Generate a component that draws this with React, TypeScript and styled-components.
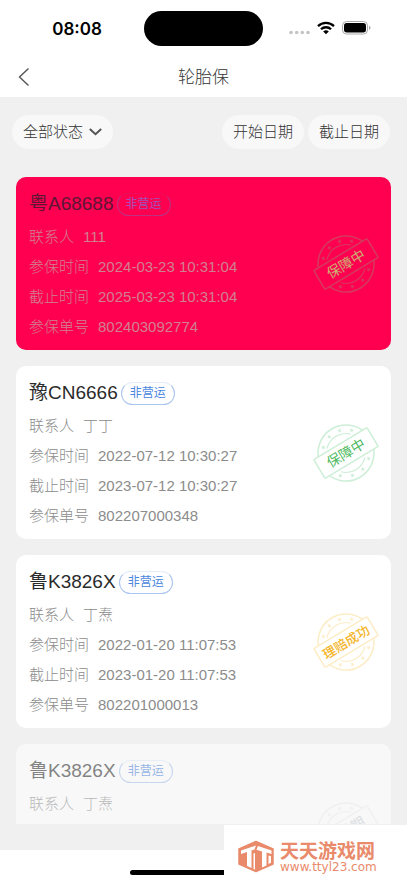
import React from 'react';
import styled, { createGlobalStyle } from 'styled-components';

const GlobalStyle = createGlobalStyle`
  * { box-sizing: border-box; }
  body {
    margin: 0;
    background: #fff;
    font-family: "Liberation Sans", "Noto Sans CJK SC", sans-serif;
  }
  button { font-family: inherit; border: 0; padding: 0; cursor: pointer; }
`;

const Screen = styled.div`
  height: 100vh;
  display: flex;
  flex-direction: column;
  overflow: hidden;
`;

const StatusBar = styled.div`
  display: grid;
  grid-template-columns: 1fr 119px 1fr;
  align-items: center;
  height: 57px;
  flex: none;
`;

const Clock = styled.time`
  justify-self: center;
  padding-left: 10px;
  font: 600 17px/24px Inter, sans-serif;
  color: #000;
`;

const Island = styled.div`
  height: 35px;
  border-radius: 18px;
  background: #000;
`;

const StatusIcons = styled.div`
  display: flex;
  justify-content: center;
  align-items: center;
  gap: 7px;
  padding: 0 10px 2px 0;
`;

const NavBar = styled.header`
  display: grid;
  grid-template-columns: 48px 1fr 48px;
  align-items: center;
  height: 40px;
  flex: none;
`;

const BackButton = styled.button`
  display: flex;
  align-items: center;
  justify-content: center;
  height: 40px;
  background: none;
`;

const Title = styled.h1`
  margin: 0;
  padding-top: 2px;
  text-align: center;
  font-size: 17px;
  line-height: 24px;
  font-weight: 300;
  color: #333;
`;

const Main = styled.main`
  flex: 1;
  min-height: 0;
  display: flex;
  flex-direction: column;
  background: #f0f0f0;
  padding: 18px 16px 26px;
`;

const Filters = styled.div`
  display: flex;
  gap: 4px;
  margin: 0 1px 28px -4px;
  flex: none;
`;

const Pill = styled.button<{ $lead?: boolean }>`
  display: flex;
  align-items: center;
  gap: 6px;
  height: 34px;
  padding: 0 11px;
  margin-right: ${(p) => (p.$lead ? 'auto' : '0')};
  border-radius: 17px;
  background: #f8f8f8;
  font-size: 15px;
  line-height: 32px;
  font-weight: 300;
  color: #333;
  white-space: nowrap;
`;

const List = styled.div`
  flex: 1;
  min-height: 0;
  overflow: hidden;
  display: flex;
  flex-direction: column;
  gap: 16px;
`;

const Card = styled.article<{ $active?: boolean; $faded?: boolean }>`
  display: flex;
  align-items: center;
  justify-content: space-between;
  flex: none;
  min-height: 173px;
  padding: 9px 12px 8px 13px;
  border-radius: 10px;
  background: ${(p) => (p.$active ? '#ff0050' : '#fff')};
  opacity: ${(p) => (p.$faded ? 0.55 : 1)};
  color: ${(p) => (p.$active ? '#d0808f' : '#8c8c8c')};
`;

const Info = styled.div`
  align-self: flex-start;
`;

const Heading = styled.div`
  display: flex;
  align-items: center;
  gap: 3px;
  height: 36px;
`;

const Plate = styled.h2<{ $active?: boolean }>`
  margin: 0;
  font-size: 19px;
  line-height: 28px;
  font-weight: 400;
  color: ${(p) => (p.$active ? '#601535' : '#2b2b2b')};
`;

const Tag = styled.span<{ $active?: boolean }>`
  height: 23px;
  padding: 0 8px;
  border: 1px solid ${(p) => (p.$active ? '#c03080' : '#a9c4ee')};
  border-top-color: ${(p) => (p.$active ? '#f00a58' : '#e3ecfa')};
  border-radius: 12px;
  font-size: 12px;
  line-height: 21px;
  color: ${(p) => (p.$active ? '#a052b8' : '#4a86dd')};
`;

const Details = styled.dl`
  margin: 0;
`;

const Row = styled.div`
  display: flex;
  gap: 9px;
  font-size: 15px;
  line-height: 30px;
  font-weight: 300;
`;

const Label = styled.dt`
  margin: 0;
`;

const Value = styled.dd`
  margin: 0;
`;

const Watermark = styled.a`
  position: fixed;
  right: 0;
  bottom: 0;
  display: flex;
  align-items: center;
  gap: 5px;
  width: 183px;
  height: 58px;
  padding: 5px 0 0 13px;
  background: #fff;
  color: #e98a6b;
  text-decoration: none;
`;

const Brand = styled.span`
  display: flex;
  flex-direction: column;
`;

const BrandName = styled.strong`
  font: 700 19px/20px "Noto Sans CJK SC", sans-serif;
`;

const BrandUrl = styled.span`
  font: 400 12px/14px "DejaVu Sans", sans-serif;
`;

const HomeArea = styled.footer`
  flex: none;
  display: flex;
  justify-content: center;
  align-items: flex-end;
  height: 33px;
  padding-bottom: 8px;
  background: #fff;
`;

const HomeBar = styled.div`
  width: 36%;
  height: 5px;
  border-radius: 3px;
  background: #000;
`;

type StampProps = { text: string; line: string; ink: string; fill: string };

const Stamp = ({ text, line, ink, fill }: StampProps) => (
  <svg width="66" height="66" viewBox="-33 -33 66 66" role="img" aria-label={text}>
    <g transform="rotate(-31)" fill="none" stroke={line}>
      <circle r="28" strokeWidth="1.5" />
      <path d="M-14-13.5A19.5 19.5 0 0 1 14-13.5M-14 13.5A19.5 19.5 0 0 0 14 13.5" strokeWidth="1.2" />
      {[-45, -15, 15, 45, 135, 165, 195, 225].map((a) => (
        <path
          key={a}
          transform={`rotate(${a}) translate(0 -23.5)`}
          d="M0-2.2 .7-.7 2.2-.6 1 .5 1.4 2.2 0 1.2-1.4 2.2-1 .5-2.2-.6-.7-.7Z"
          fill={line}
          stroke="none"
        />
      ))}
      <rect x="-31" y="-11" width="62" height="22" rx="1" fill={fill} strokeWidth="1.5" />
      <text
        y="5"
        textAnchor="middle"
        fontSize={text.length > 3 ? 13 : 14}
        fontWeight={text.length > 3 ? 500 : 400}
        fontFamily="Noto Sans CJK SC, sans-serif"
        fill={ink}
        stroke="none"
      >
        {text}
      </text>
    </g>
  </svg>
);

const green = { text: '保障中', line: '#cdeed7', ink: '#4fbb62', fill: '#fff' };
const red = { text: '保障中', line: '#d5395f', ink: '#cbb070', fill: '#ff0050' };
const yellow = { text: '理赔成功', line: '#fdedc6', ink: '#f5b52c', fill: '#fff' };
const gray = { text: '已过期', line: '#eff1f4', ink: '#ccd0d4', fill: '#fff' };

type Policy = {
  plate: string;
  rows: [string, string][];
  stamp: StampProps;
  active?: boolean;
  faded?: boolean;
};

const policies: Policy[] = [
  {
    plate: '粤A68688',
    rows: [['联系人', '111'], ['参保时间', '2024-03-23 10:31:04'], ['截止时间', '2025-03-23 10:31:04'], ['参保单号', '802403092774']],
    stamp: red,
    active: true,
  },
  {
    plate: '豫CN6666',
    rows: [['联系人', '丁丁'], ['参保时间', '2022-07-12 10:30:27'], ['截止时间', '2023-07-12 10:30:27'], ['参保单号', '802207000348']],
    stamp: green,
  },
  {
    plate: '鲁K3826X',
    rows: [['联系人', '丁焘'], ['参保时间', '2022-01-20 11:07:53'], ['截止时间', '2023-01-20 11:07:53'], ['参保单号', '802201000013']],
    stamp: yellow,
  },
  { plate: '鲁K3826X', rows: [['联系人', '丁焘']], stamp: gray, faded: true },
];

export default function App() {
  return (
    <Screen>
      <GlobalStyle />
      <StatusBar>
        <Clock>08:08</Clock>
        <Island />
        <StatusIcons>
          <svg width="21" height="18" viewBox="0 0 21 18" fill="#c4c4c4">
            <circle cx="2" cy="13.5" r="1.8" />
            <circle cx="7.7" cy="13.5" r="1.8" />
            <circle cx="13.3" cy="13.5" r="1.8" />
            <circle cx="19" cy="13.5" r="1.8" />
          </svg>
          <svg width="18" height="14" viewBox="0 0 18 14" fill="none" stroke="#000" strokeWidth="2.3">
            <path d="M1 5.1a11.4 11.4 0 0 1 16 0" />
            <path d="M4 8.3a7.1 7.1 0 0 1 10 0" />
            <path d="M9 13.3 6.2 10.6a4 4 0 0 1 5.6 0Z" fill="#000" stroke="none" />
          </svg>
          <svg width="29" height="14" viewBox="0 0 29 14">
            <rect x="0.5" y="0.5" width="25" height="12.5" rx="4" fill="none" stroke="#aaa" />
            <rect x="2" y="2" width="22" height="9.5" rx="2.7" />
            <path d="M27 4.7c2 .6 2 3.6 0 4.2Z" fill="#aaa" />
          </svg>
        </StatusIcons>
      </StatusBar>
      <NavBar>
        <BackButton aria-label="返回">
          <svg width="12" height="20" viewBox="0 0 12 20" fill="none" stroke="#555" strokeWidth="1.4">
            <path d="M10.5 1.5 1.5 10l9 8.5" />
          </svg>
        </BackButton>
        <Title>轮胎保</Title>
      </NavBar>
      <Main>
        <Filters>
          <Pill $lead>
            全部状态
            <svg width="13" height="8" viewBox="0 0 13 8" fill="none" stroke="#555" strokeWidth="2">
              <path d="M.8 1 6.5 6.2 12.2 1" />
            </svg>
          </Pill>
          <Pill>开始日期</Pill>
          <Pill>截止日期</Pill>
        </Filters>
        <List>
          {policies.map((p, i) => (
            <Card key={i} $active={p.active} $faded={p.faded}>
              <Info>
                <Heading>
                  <Plate $active={p.active}>{p.plate}</Plate>
                  <Tag $active={p.active}>非营运</Tag>
                </Heading>
                <Details>
                  {p.rows.map(([label, value]) => (
                    <Row key={label}>
                      <Label>{label}</Label>
                      <Value>{value}</Value>
                    </Row>
                  ))}
                </Details>
              </Info>
              <Stamp {...p.stamp} />
            </Card>
          ))}
        </List>
      </Main>
      <HomeArea>
        <HomeBar />
      </HomeArea>
      <Watermark href="#">
        <svg width="38" height="33" viewBox="0 0 38 33">
          <path d="M19 1.5 36 9v15L19 31.5 2 24V9Z" fill="#e98a6b" stroke="#e98a6b" strokeWidth="1.5" strokeLinejoin="round" />
          <path d="M4 10.500 19 5.500 17.500 9.500 14.500 10.500V28L10 26V12L4 14Z" fill="#fff" />
          <path d="M21 6 34.500 10.500V14L29.500 12.500V25.500L25 27.500V11.500L19.500 9.800Z" fill="#fff" />
          <path d="M16.500 13.500 18 13V29.500L16.500 29Z" fill="#fff" />
          <path d="M31.500 15.500 34 16.200V22.800L31.500 24Z" fill="#fff" />
        </svg>
        <Brand>
          <BrandName>天天游戏网</BrandName>
          <BrandUrl>www.ttyl23.com</BrandUrl>
        </Brand>
      </Watermark>
    </Screen>
  );
}
